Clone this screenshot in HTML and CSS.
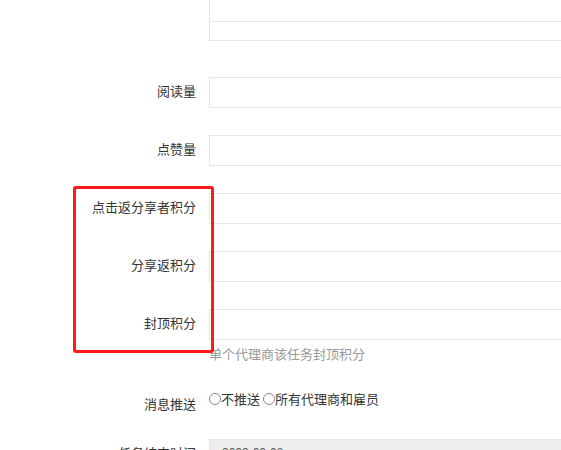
FILE: index.html
```html
<!DOCTYPE html>
<html lang="zh">
<head>
<meta charset="utf-8">
<link rel="stylesheet" href="styles.css">
</head>
<body>
<div class="form">
  <div class="top-box">
    <div class="top-cell first"></div>
    <div class="top-cell"></div>
  </div>

  <div class="row first-row">
    <div class="label">阅读量</div>
    <div class="control"><div class="input"></div></div>
  </div>
  <div class="row">
    <div class="label">点赞量</div>
    <div class="control"><div class="input"></div></div>
  </div>
  <div class="row">
    <div class="label">点击返分享者积分</div>
    <div class="control"><div class="input"></div></div>
  </div>
  <div class="row">
    <div class="label">分享返积分</div>
    <div class="control"><div class="input"></div></div>
  </div>
  <div class="row tight">
    <div class="label">封顶积分</div>
    <div class="control">
      <div class="input"></div>
      <div class="hint">单个代理商该任务封顶积分</div>
    </div>
  </div>
  <div class="row radio-row">
    <div class="label">消息推送</div>
    <div class="control radios">
      <label class="radio"><span class="dot"></span>不推送</label>
      <label class="radio"><span class="dot"></span>所有代理商和雇员</label>
    </div>
  </div>
  <div class="row">
    <div class="label">任务结束时间</div>
    <div class="control"><div class="input disabled">2022-02-08</div></div>
  </div>

  <div class="highlight"></div>
</div>
</body>
</html>
```

FILE: styles.css
```css
html, body {
  margin: 0;
  padding: 0;
  overflow: hidden;
  background: #fff;
}

body {
  font-family: "Noto Sans CJK SC", "Noto Sans", sans-serif;
  font-size: 13px;
  color: #333;
}

.form {
  position: relative;
  width: 561px;
  height: 450px;
  overflow: hidden;
}

.top-box {
  margin-left: 209px;
  width: 600px;
  border: 1px solid #e6e6e6;
  border-top: none;
}

.top-cell {
  height: 18px;
}

.top-cell.first {
  height: 21px;
  border-bottom: 1px solid #e6e6e6;
}

.row {
  display: flex;
  align-items: flex-start;
  margin-bottom: 27px;
}

.first-row {
  margin-top: 36px;
}

.row.tight {
  margin-bottom: 25px;
}

.radio-row {
  margin-bottom: 19px;
}

.label {
  flex: none;
  width: 209px;
  height: 31px;
  box-sizing: border-box;
  padding-right: 13px;
  text-align: right;
  line-height: 28px;
  white-space: nowrap;
}

.radio-row .label {
  line-height: 30px;
}

.control {
  flex: none;
  width: 600px;
}

.input {
  height: 31px;
  box-sizing: border-box;
  border: 1px solid #e6e6e6;
  background: #fff;
}

.input.disabled {
  background: #eeeeee;
  color: #555;
  padding-left: 12px;
  font-family: "Liberation Sans", Arial, sans-serif;
  font-size: 12px;
  line-height: 27px;
}

.hint {
  margin-top: 4px;
  line-height: 20px;
  color: #999;
}

.radios {
  display: flex;
  align-items: center;
  line-height: 20px;
}

.radio {
  display: inline-flex;
  align-items: center;
  margin-right: 3px;
}

.dot {
  width: 10px;
  height: 10px;
  border: 1px solid #8a8a8a;
  border-radius: 50%;
  margin-top: -1px;
}

.highlight {
  position: absolute;
  left: 73px;
  top: 186px;
  width: 141px;
  height: 167px;
  box-sizing: border-box;
  border: 3px solid #ff1a1a;
  border-radius: 3px;
}
```
